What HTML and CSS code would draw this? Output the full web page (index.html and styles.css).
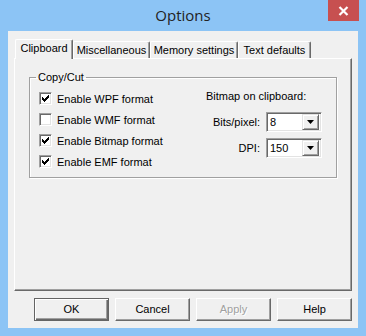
FILE: index.html
```html
<!DOCTYPE html>
<html>
<head>
    <title>Options</title>
    <link rel="stylesheet" href="styles.css">
</head>
<body>
    <div class="window">
        <div class="titleBar">
            <div class="titleSpacer"></div>
            <div class="titleText">Options</div>
            <div class="closeButton">
                <svg width="11" height="10" viewBox="0 0 11 10">
                    <path d="M1.5 1 L9.5 9 M9.5 1 L1.5 9" stroke="#fff" stroke-width="2.2"/>
                </svg>
            </div>
        </div>

        <div class="client">
            <div class="tabRow">
                <div class="tab selected" style="width: 58px">Clipboard</div>
                <div class="tab" style="width: 77px">Miscellaneous</div>
                <div class="tab" style="width: 88px">Memory settings</div>
                <div class="tab" style="width: 73px">Text defaults</div>
            </div>

            <div class="tabPage">
                <fieldset class="groupBox">
                    <legend>Copy/Cut</legend>
                    <div class="groupContent">
                        <div class="checkList">
                            <div class="checkRow">
                                <span class="checkBox checked">
                                    <svg width="9" height="9" viewBox="2 2 9 9"><path d="M3 5H4V6H5V7H6V6H7V5H8V4H9V3H10V6H9V7H8V8H7V9H6V10H5V9H4V8H3Z" fill="#000" shape-rendering="crispEdges"/></svg>
                                </span>
                                <span>Enable WPF format</span>
                            </div>
                            <div class="checkRow">
                                <span class="checkBox"></span>
                                <span>Enable WMF format</span>
                            </div>
                            <div class="checkRow">
                                <span class="checkBox checked">
                                    <svg width="9" height="9" viewBox="2 2 9 9"><path d="M3 5H4V6H5V7H6V6H7V5H8V4H9V3H10V6H9V7H8V8H7V9H6V10H5V9H4V8H3Z" fill="#000" shape-rendering="crispEdges"/></svg>
                                </span>
                                <span>Enable Bitmap format</span>
                            </div>
                            <div class="checkRow">
                                <span class="checkBox checked">
                                    <svg width="9" height="9" viewBox="2 2 9 9"><path d="M3 5H4V6H5V7H6V6H7V5H8V4H9V3H10V6H9V7H8V8H7V9H6V10H5V9H4V8H3Z" fill="#000" shape-rendering="crispEdges"/></svg>
                                </span>
                                <span>Enable EMF format</span>
                            </div>
                        </div>

                        <div class="bitmapSettings">
                            <div class="bitmapTitle">Bitmap on clipboard:</div>
                            <div class="comboGrid">
                                <span class="comboLabel">Bits/pixel:</span>
                                <div class="comboBox">
                                    <span class="comboValue">8</span>
                                    <span class="comboArrow"><svg width="7" height="4" viewBox="0 0 7 4"><path d="M0 0H7L3.5 4Z" fill="#000"/></svg></span>
                                </div>
                                <span class="comboLabel">DPI:</span>
                                <div class="comboBox">
                                    <span class="comboValue">150</span>
                                    <span class="comboArrow"><svg width="7" height="4" viewBox="0 0 7 4"><path d="M0 0H7L3.5 4Z" fill="#000"/></svg></span>
                                </div>
                            </div>
                        </div>
                    </div>
                </fieldset>
            </div>

            <div class="buttonRow">
                <div class="pushButton default">OK</div>
                <div class="pushButton">Cancel</div>
                <div class="pushButton disabled">Apply</div>
                <div class="pushButton">Help</div>
            </div>
        </div>
    </div>
</body>
</html>
```

FILE: styles.css
```css
* {
    box-sizing: border-box;
}
body {
    margin: 0;
    width: 366px;
    height: 336px;
    background-color: #8cc4f5;
    font-family: "Liberation Sans", Arial, sans-serif;
    font-size: 11px;
    color: #000;
}
.window {
    height: 336px;
    display: flex;
    flex-direction: column;
}
.titleBar {
    height: 31px;
    display: flex;
    align-items: flex-start;
}
.titleSpacer {
    width: 38px;
}
.titleText {
    flex: 1;
    text-align: center;
    font-family: "Open Sans", "Noto Sans", sans-serif;
    font-size: 15px;
    line-height: 20px;
    padding-top: 5px;
    color: #222;
}
.closeButton {
    width: 31px;
    height: 21px;
    margin-right: 7px;
    background-color: #c75050;
    display: flex;
    align-items: center;
    justify-content: center;
}
.client {
    flex: 1;
    margin: 0 8px 8px 8px;
    background-color: #f0f0f0;
    padding: 8px 6px 7px 6px;
    display: flex;
    flex-direction: column;
}

/* tabs */
.tabRow {
    height: 19px;
    display: flex;
    align-items: flex-end;
    padding-left: 1px;
}
.tab {
    position: relative;
    height: 17px;
    padding-top: 2px;
    line-height: 13px;
    text-align: center;
    white-space: nowrap;
    background-color: #f0f0f0;
    border-top: 1px solid #fff;
    border-left: 1px solid #fff;
    border-right: 1px solid #696969;
    box-shadow: inset -1px 0 0 #a0a0a0;
    border-radius: 2px 2px 0 0;
}
.tab.selected {
    height: 20px;
    margin-bottom: -1px;
    z-index: 1;
}
.tabPage {
    flex: 1;
    border-top: 1px solid #fff;
    border-left: 1px solid #fff;
    border-right: 1px solid #696969;
    border-bottom: 1px solid #696969;
    box-shadow: inset -1px -1px 0 #a0a0a0;
    padding: 12px 14px 0 14px;
}

/* group box */
.groupBox {
    margin: 0;
    min-width: 0;
    border: 1px solid #a0a0a0;
    box-shadow: 1px 1px 0 #fff, inset 1px 1px 0 #fff;
    padding: 5px 14px 5px 9px;
}
.groupBox legend {
    padding: 0 2px;
    margin-left: -3px;
    line-height: 12px;
}
.groupContent {
    display: flex;
    justify-content: space-between;
}
.checkRow {
    height: 21px;
    display: flex;
    align-items: center;
    gap: 5px;
}
.checkBox {
    width: 13px;
    height: 13px;
    background-color: #fff;
    border-top: 1px solid #a0a0a0;
    border-left: 1px solid #a0a0a0;
    border-right: 1px solid #fff;
    border-bottom: 1px solid #fff;
    box-shadow: inset 1px 1px 0 #696969, inset -1px -1px 0 #e3e3e3;
    display: flex;
    align-items: center;
    justify-content: center;
}
.bitmapSettings {
    width: 116px;
    padding-top: 2px;
}
.bitmapTitle {
    line-height: 13px;
    margin-bottom: 9px;
}
.comboGrid {
    display: grid;
    grid-template-columns: 1fr 56px;
    column-gap: 6px;
    row-gap: 6px;
    align-items: center;
}
.comboLabel {
    justify-self: end;
}
.comboBox {
    height: 20px;
    background-color: #fff;
    border-top: 1px solid #a0a0a0;
    border-left: 1px solid #a0a0a0;
    border-right: 1px solid #fff;
    border-bottom: 1px solid #fff;
    box-shadow: inset 1px 1px 0 #696969, inset -1px -1px 0 #e3e3e3;
    padding: 2px;
    display: flex;
    align-items: center;
}
.comboValue {
    flex: 1;
    padding-left: 1px;
    color: #000;
}
.comboArrow {
    width: 17px;
    height: 16px;
    background-color: #f0f0f0;
    border-top: 1px solid #e3e3e3;
    border-left: 1px solid #e3e3e3;
    border-right: 1px solid #696969;
    border-bottom: 1px solid #696969;
    box-shadow: inset 1px 1px 0 #fff, inset -1px -1px 0 #a0a0a0;
    display: flex;
    align-items: center;
    justify-content: center;
}

/* buttons */
.buttonRow {
    margin-top: 7px;
    display: flex;
    justify-content: flex-end;
    gap: 6px;
}
.pushButton {
    width: 75px;
    height: 23px;
    line-height: 21px;
    text-align: center;
    background-color: #f0f0f0;
    border-top: 1px solid #fff;
    border-left: 1px solid #fff;
    border-right: 1px solid #696969;
    border-bottom: 1px solid #696969;
    box-shadow: inset -1px -1px 0 #a0a0a0;
}
.pushButton.default {
    border: 1px solid #646464;
    box-shadow: inset 1px 1px 0 #fff, inset -1px -1px 0 #696969, inset -2px -2px 0 #a0a0a0;
}
.pushButton.disabled {
    color: #a0a0a0;
    text-shadow: 1px 1px 0 #fff;
}
```
